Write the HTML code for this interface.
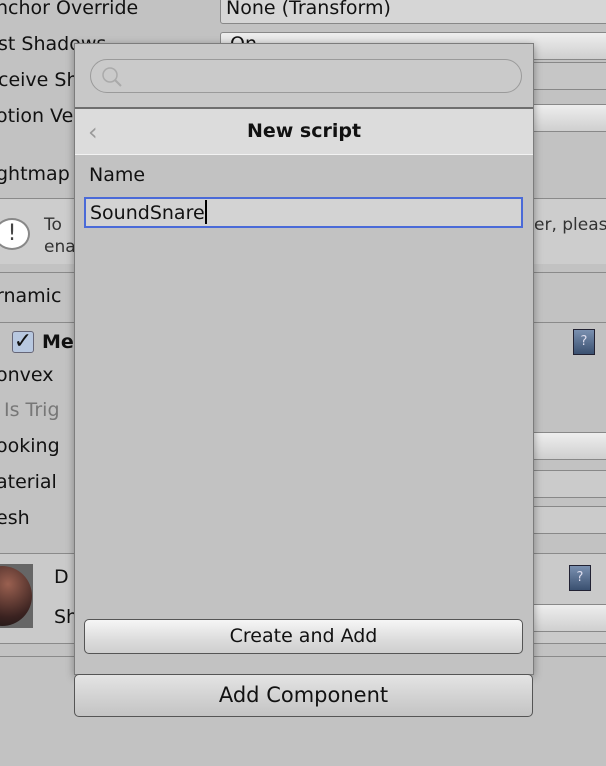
<!DOCTYPE html>
<html><head><style>
body{margin:0;width:606px;height:766px;background:#c2c2c2;position:relative;overflow:hidden;font-family:"DejaVu Sans","Liberation Sans",sans-serif;font-size:19px;color:#111}
.a{position:absolute;white-space:nowrap}
.ln{position:absolute;left:0;width:606px;height:1px;background:#8a8a8a}
.fld{position:absolute;background:linear-gradient(#eee,#cfcfcf);border:1px solid #888;border-radius:3px}
</style></head><body>
<div class="a" style="left:-4px;top:-3px">nchor Override</div>
<div class="fld" style="left:220px;top:-4px;width:400px;height:26px;background:#d6d6d6"></div>
<div class="a" style="left:226px;top:-3px">None (Transform)</div>
<div class="a" style="left:-2px;top:33px">st Shadows</div>
<div class="fld" style="left:220px;top:32px;width:400px;height:26px"></div>
<div class="a" style="left:230px;top:33px">On</div>
<div class="a" style="left:-2px;top:69px">ceive Sh</div>
<div class="fld" style="left:520px;top:62px;width:100px;height:26px;background:#c6c6c6"></div>
<div class="a" style="left:-4px;top:105px">otion Ve</div>
<div class="fld" style="left:520px;top:104px;width:100px;height:26px"></div>
<div class="a" style="left:-4px;top:163px">ghtmap</div>
<div class="ln" style="top:198px"></div>
<div style="position:absolute;left:0;top:199px;width:606px;height:65px;background:#cdcdcd"></div>
<div class="a" style="left:-6px;top:218px;width:32px;height:28px;border:2px solid #888;border-radius:50%;background:#fff;text-align:center;font-size:22px;line-height:28px;color:#444">!</div>
<div class="a" style="left:44px;top:215px;font-size:17px;color:#333">To</div>
<div class="a" style="left:44px;top:237px;font-size:17px;color:#333">ena</div>
<div class="a" style="left:534px;top:215px;font-size:17px;color:#333">er, pleas</div>
<div class="ln" style="top:272px"></div>
<div class="a" style="left:-4px;top:285px">rnamic</div>
<div class="ln" style="top:322px"></div>
<div class="a" style="left:-4px;top:331px;width:4px;height:22px;background:#7ab34a"></div>
<div class="a" style="left:12px;top:331px;width:20px;height:20px;border:1px solid #667;border-radius:3px;background:#b8c8e0;font-size:22px;line-height:20px;font-weight:bold;text-align:center">✓</div>
<div class="a" style="left:42px;top:331px;font-weight:bold">Me</div>
<div class="a" style="left:573px;top:329px;width:20px;height:24px;background:linear-gradient(#7a90b0,#3a5070);border:1px solid #223;color:#dde;font-size:13px;text-align:center;line-height:24px">?</div>
<div class="a" style="left:-4px;top:364px">onvex</div>
<div class="a" style="left:4px;top:399px;color:#777">Is Trig</div>
<div class="a" style="left:-4px;top:435px">ooking</div>
<div class="fld" style="left:520px;top:432px;width:100px;height:26px"></div>
<div class="a" style="left:-4px;top:471px">aterial</div>
<div class="fld" style="left:520px;top:470px;width:100px;height:26px;background:#cbcbcb"></div>
<div class="a" style="left:-4px;top:507px">esh</div>
<div class="fld" style="left:520px;top:506px;width:100px;height:26px;background:#cbcbcb"></div>
<div class="ln" style="top:553px"></div>
<div style="position:absolute;left:0;top:554px;width:606px;height:90px;background:#cacaca"></div>
<div class="a" style="left:0;top:564px;width:33px;height:64px;background:#666;overflow:hidden"><div style="position:absolute;left:-28px;top:2px;width:60px;height:60px;border-radius:50%;background:radial-gradient(circle at 60% 30%,#9a6050,#3a2220 60%,#111)"></div></div>
<div class="a" style="left:54px;top:566px">D</div>
<div class="a" style="left:54px;top:606px">Sh</div>
<div class="a" style="left:569px;top:565px;width:20px;height:24px;background:linear-gradient(#7a90b0,#3a5070);border:1px solid #223;color:#dde;font-size:13px;text-align:center;line-height:24px">?</div>
<div class="fld" style="left:520px;top:604px;width:100px;height:26px"></div>
<div class="ln" style="top:643px"></div>
<div class="ln" style="top:656px"></div>

<!-- popup -->
<div class="a" style="left:74px;top:43px;width:458px;height:630px;background:#c2c2c2;border:1px solid #7c7c7c;box-shadow:0 2px 8px rgba(0,0,0,.35)">
  <div class="a" style="left:0;top:0;width:458px;height:63px;background:#c8c8c8"></div>
  <div class="a" style="left:15px;top:15px;width:430px;height:32px;border:1px solid #9a9a9a;border-radius:17px;background:#cacaca"></div>
  <svg class="a" style="left:24px;top:20px" width="26" height="24"><circle cx="11" cy="11" r="7" fill="none" stroke="#aaa" stroke-width="1.5"/><line x1="16" y1="16" x2="22" y2="22" stroke="#aaa" stroke-width="2"/></svg>
  <div class="a" style="left:0;top:63px;width:458px;height:2px;background:#6e6e6e"></div>
  <div class="a" style="left:0;top:65px;width:458px;height:45px;background:#dcdcdc"></div>
  <div class="a" style="left:0;top:110px;width:458px;height:1px;background:#f2f2f2"></div>
  <div class="a" style="left:13px;top:74px;color:#999;font-size:24px">‹</div>
  <div class="a" style="left:0;top:76px;width:458px;text-align:center;font-weight:bold;font-size:19px">New script</div>
  <div class="a" style="left:14px;top:120px">Name</div>
  <div class="a" style="left:9px;top:153px;width:435px;height:27px;border:2px solid #4a6ad8;background:#d3d3d3"></div>
  <div class="a" style="left:15px;top:156px">SoundSnare<span style="display:inline-block;width:2px;height:24px;background:#000;vertical-align:-5px"></span></div>
  <div class="a" style="left:9px;top:575px;width:437px;height:33px;border:1px solid #555;border-radius:5px;background:linear-gradient(#f6f6f6,#dcdcdc 60%,#cfcfcf);text-align:center;line-height:33px">Create and Add</div>
</div>
<div class="a" style="left:74px;top:674px;width:457px;height:41px;border:1px solid #555;border-radius:5px;background:linear-gradient(#e4e4e4,#d0d0d0 60%,#c4c4c4);text-align:center;line-height:41px;font-size:21px">Add Component</div>
</body></html>
